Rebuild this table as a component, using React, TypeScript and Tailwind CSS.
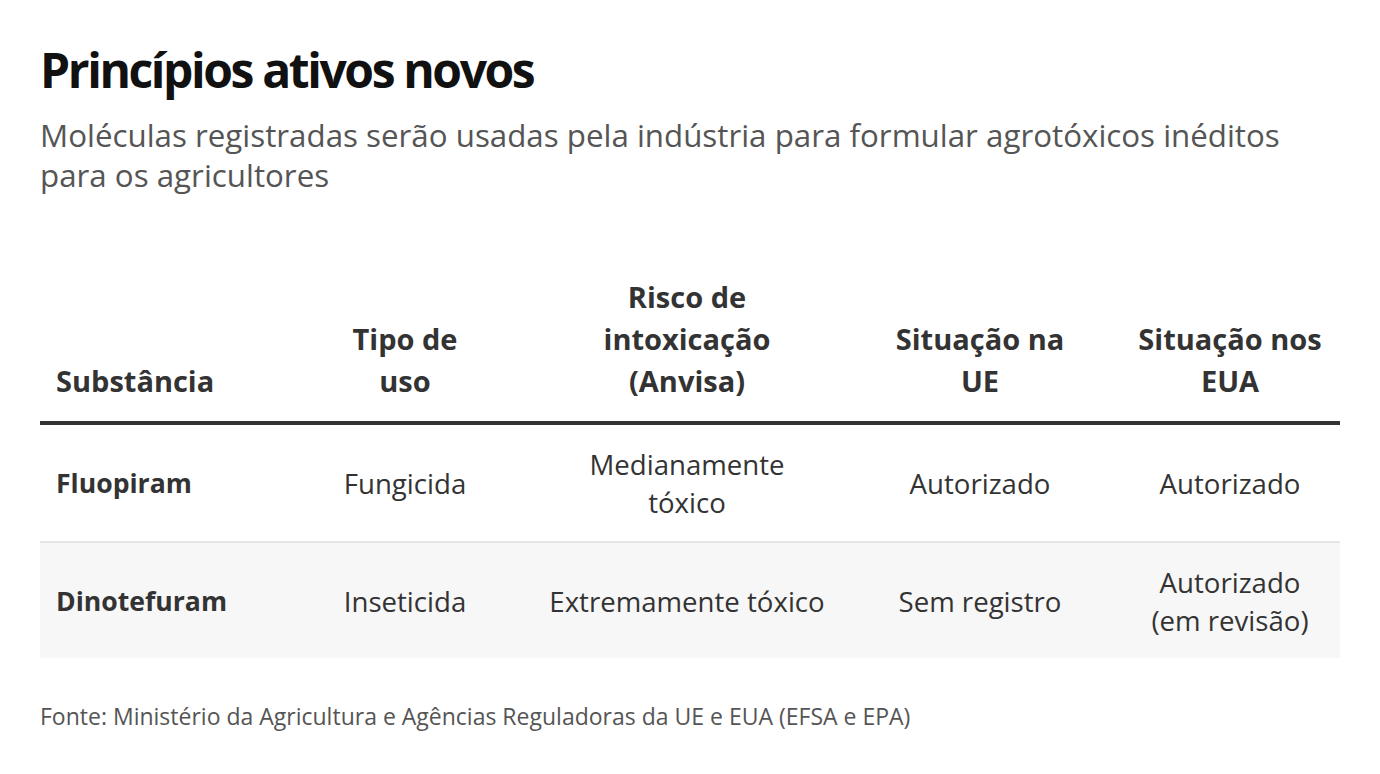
export default function App() {
  const rows = [
    {
      name: "Fluopiram",
      tipo: "Fungicida",
      risco: ["Medianamente", "tóxico"],
      ue: "Autorizado",
      eua: ["Autorizado"],
    },
    {
      name: "Dinotefuram",
      tipo: "Inseticida",
      risco: ["Extremamente tóxico"],
      ue: "Sem registro",
      eua: ["Autorizado", "(em revisão)"],
    },
  ]

  return (
    <div className="min-h-screen bg-white px-[40px] pt-[40px] font-['Open_Sans',sans-serif] text-[#333]">
      <h1 className="text-[48px] font-bold leading-[60px] tracking-[-0.05em] text-[#111]">
        Princípios ativos novos
      </h1>
      <p className="mt-[15px] text-[31.3px] leading-[40px] text-[#555]">
        Moléculas registradas serão usadas pela indústria para formular agrotóxicos inéditos para os
        agricultores
      </p>

      <table className="mt-[81px] w-[1300px] table-fixed border-collapse">
        <colgroup>
          <col className="w-[236px]" />
          <col className="w-[258px]" />
          <col className="w-[306px]" />
          <col className="w-[280px]" />
          <col className="w-[220px]" />
        </colgroup>
        <thead>
          <tr className="border-b-4 border-[#333] text-[29px] font-bold leading-[42px]">
            <th className="px-4 pb-[19px] text-left align-bottom">Substância</th>
            <th className="px-2 pb-[19px] text-center align-bottom">
              Tipo de
              <br />
              uso
            </th>
            <th className="px-2 pb-[19px] text-center align-bottom">
              Risco de
              <br />
              intoxicação
              <br />
              (Anvisa)
            </th>
            <th className="px-2 pb-[19px] text-center align-bottom">
              Situação na
              <br />
              UE
            </th>
            <th className="px-2 pb-[19px] text-center align-bottom">
              Situação nos
              <br />
              EUA
            </th>
          </tr>
        </thead>
        <tbody className="text-[27.6px] leading-[38px]">
          {rows.map((r, i) => (
            <tr
              key={r.name}
              className={i === 0 ? "h-[119px] border-b-2 border-[#e6e6e6] bg-white" : "h-[116px] bg-[#f7f7f7]"}
            >
              <td className="px-4 text-left text-[26.6px] font-bold">{r.name}</td>
              <td className="px-2 text-center">{r.tipo}</td>
              <td className="px-2 text-center">
                {r.risco.map((t) => (
                  <div key={t}>{t}</div>
                ))}
              </td>
              <td className="px-2 text-center">{r.ue}</td>
              <td className="px-2 text-center">
                {r.eua.map((t) => (
                  <div key={t}>{t}</div>
                ))}
              </td>
            </tr>
          ))}
        </tbody>
      </table>

      <p className="mt-[43px] text-[23px] leading-[30px] text-[#555]">
        Fonte: Ministério da Agricultura e Agências Reguladoras da UE e EUA (EFSA e EPA)
      </p>
    </div>
  )
}
